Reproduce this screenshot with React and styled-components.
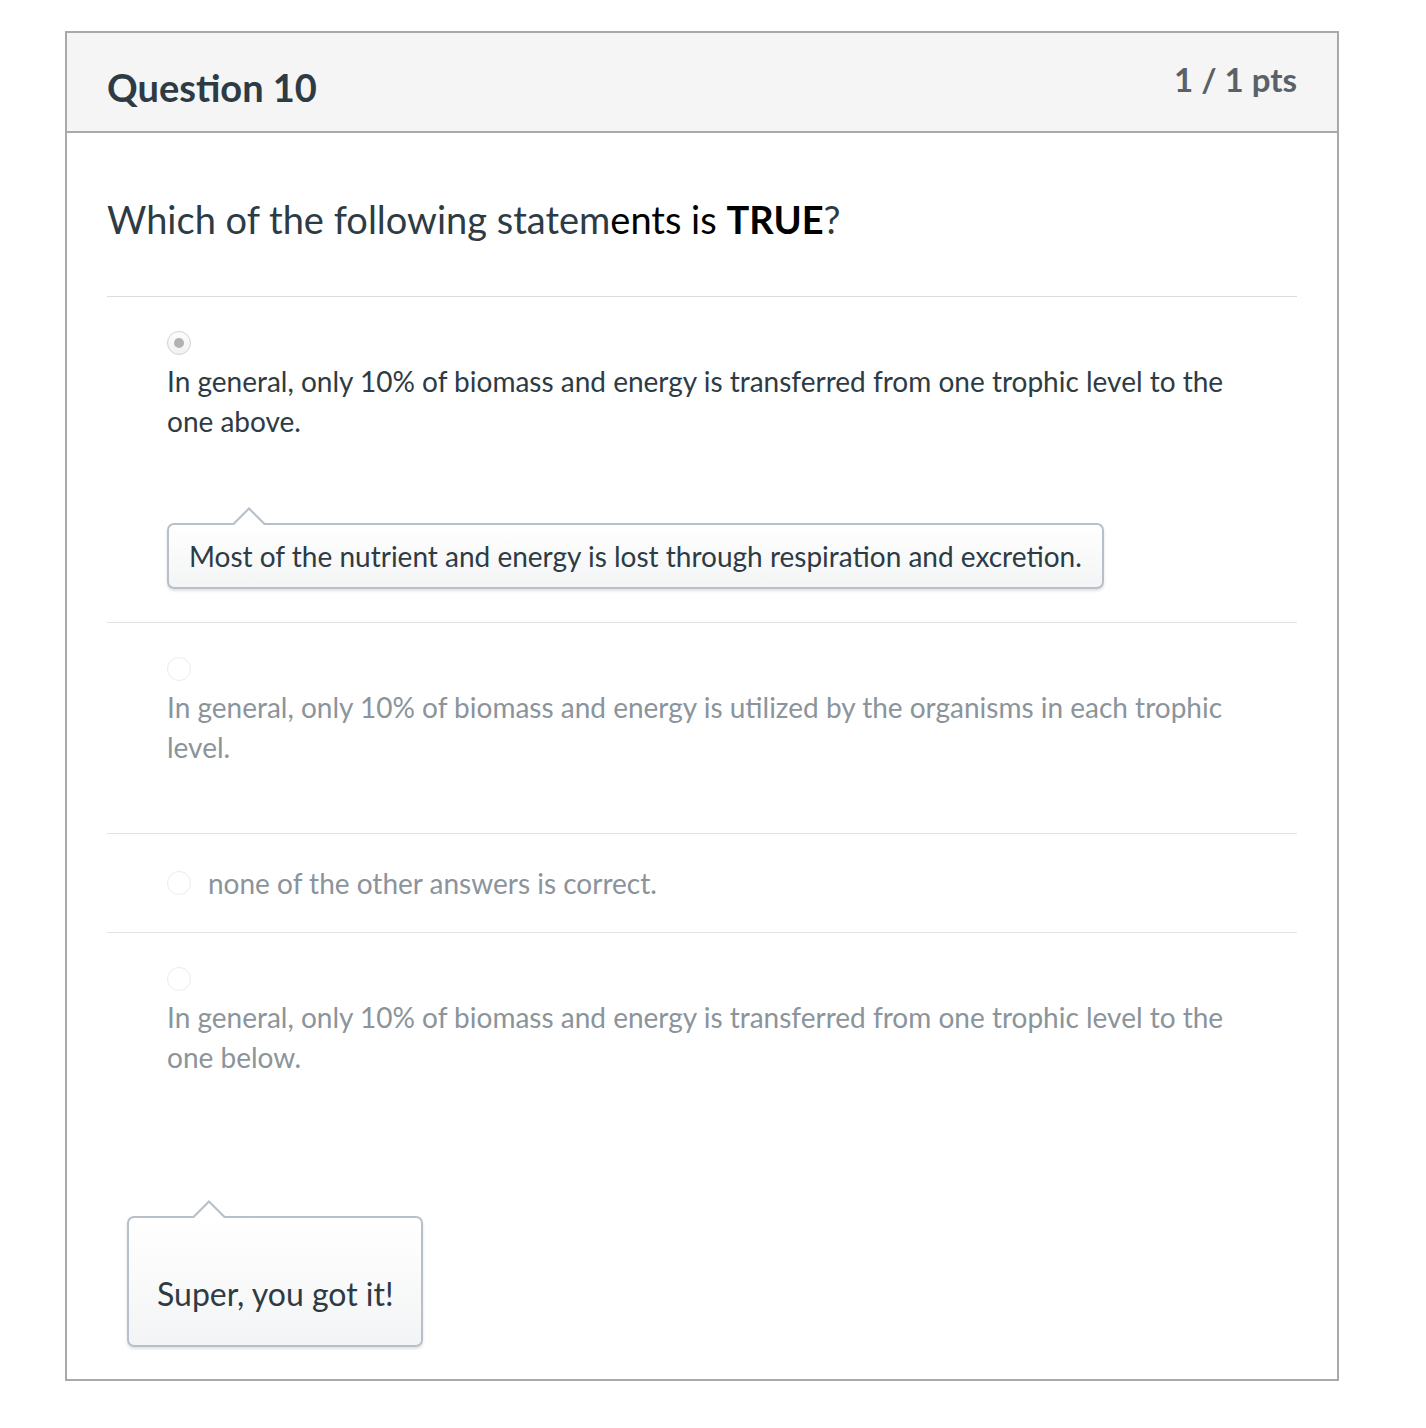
import React from 'react';
import styled, { createGlobalStyle } from 'styled-components';

const GlobalStyle = createGlobalStyle`
  body {
    margin: 0;
    background: #fff;
    font-family: Lato, "Open Sans", sans-serif;
    color: #2d3b45;
  }
`;

const Page = styled.div`
  padding: 31px 87px 46px 65px;
`;

const Card = styled.div`
  border: 2px solid #a9a9a9;
`;

const Header = styled.div`
  display: flex;
  justify-content: space-between;
  background: #f5f5f5;
  border-bottom: 2px solid #a9a9a9;
  height: 98px;
  padding: 0 40px;
`;

const Title = styled.h2`
  margin: 0;
  font-size: 38px;
  font-weight: 700;
  line-height: 40px;
  padding-top: 34px;
  color: #2d3b45;
`;

const Points = styled.div`
  font-size: 33px;
  font-weight: 700;
  line-height: 36px;
  padding-top: 28px;
  color: #5b6168;
`;

const Body = styled.div`
  padding: 0 40px 32px;
`;

const QuestionText = styled.div`
  font-size: 38px;
  line-height: 48px;
  padding: 62px 0 53px;
  border-bottom: 1px solid #dcdcdc;
  .dark { color: #000; }
  strong { color: #000; }
`;

const Answer = styled.div`
  padding: ${p => p.$top}px 60px ${p => p.$bottom}px 60px;
  border-bottom: ${p => (p.$last ? 'none' : '1px solid #e2e2e2')};
  display: ${p => (p.$inline ? 'flex' : 'block')};
  align-items: center;
  gap: 17px;
`;

const Radio = styled.span`
  display: flex;
  align-items: center;
  justify-content: center;
  box-sizing: border-box;
  width: 24px;
  height: 24px;
  border-radius: 50%;
  border: 1px solid ${p => (p.$checked ? '#d2d2d2' : '#ececec')};
  background: ${p => (p.$checked ? 'linear-gradient(#fdfdfd, #f1f1f1)' : '#fff')};
  flex-shrink: 0;
  &::after {
    content: '';
    display: ${p => (p.$checked ? 'block' : 'none')};
    width: 10px;
    height: 10px;
    border-radius: 50%;
    background: #b2b2b2;
  }
`;

const AnswerText = styled.div`
  font-size: 28px;
  line-height: 40px;
  margin-top: ${p => (p.$inline ? 0 : 6)}px;
  color: ${p => (p.$selected ? '#2d3b45' : '#8b949b')};
`;

const Bubble = styled.div`
  position: relative;
  box-sizing: border-box;
  display: ${p => (p.$wide ? 'inline-block' : 'block')};
  width: ${p => (p.$width ? `${p.$width}px` : 'auto')};
  margin-top: ${p => p.$mt}px;
  margin-left: ${p => p.$ml}px;
  padding: ${p => p.$pad};
  border: 2px solid #b7c0c8;
  border-radius: 7px;
  background: linear-gradient(#ffffff, #f3f4f5);
  box-shadow: 0 2px 3px rgba(0, 0, 0, 0.12);
  font-size: ${p => p.$size}px;
  line-height: 40px;
  color: #2d3b45;
  &::before,
  &::after {
    content: '';
    position: absolute;
    left: 62px;
    bottom: 100%;
    border-left: 18px solid transparent;
    border-right: 18px solid transparent;
    border-bottom: 18px solid #b7c0c8;
  }
  &::after {
    left: 65px;
    border-left-width: 15px;
    border-right-width: 15px;
    border-bottom: 15px solid #fff;
  }
`;

const App = () => (
  <>
    <GlobalStyle />
    <Page>
      <Card>
        <Header>
          <Title>Question 10</Title>
          <Points>1 / 1 pts</Points>
        </Header>
        <Body>
          <QuestionText>
            Which of the following statem<span className="dark">ents is </span>
            <strong>TRUE</strong>?
          </QuestionText>

          <Answer $top={34} $bottom={33}>
            <Radio $checked />
            <AnswerText $selected>
              In general, only 10% of biomass and energy is transferred from one trophic level to the one above.
            </AnswerText>
            <Bubble $wide $mt={82} $ml={0} $pad="11px 20px 11px 20px" $size={28}>
              Most of the nutrient and energy is lost through respiration and excretion.
            </Bubble>
          </Answer>

          <Answer $top={34} $bottom={66}>
            <Radio />
            <AnswerText>
              In general, only 10% of biomass and energy is utilized by the organisms in each trophic level.
            </AnswerText>
          </Answer>

          <Answer $top={29} $bottom={29} $inline>
            <Radio />
            <AnswerText $inline>none of the other answers is correct.</AnswerText>
          </Answer>

          <Answer $top={34} $bottom={0} $last>
            <Radio />
            <AnswerText>
              In general, only 10% of biomass and energy is transferred from one trophic level to the one below.
            </AnswerText>
          </Answer>

          <Bubble $width={296} $mt={139} $ml={20} $pad="56px 0 31px 28px" $size={32}>
            Super, you got it!
          </Bubble>
        </Body>
      </Card>
    </Page>
  </>
);

export default App;
